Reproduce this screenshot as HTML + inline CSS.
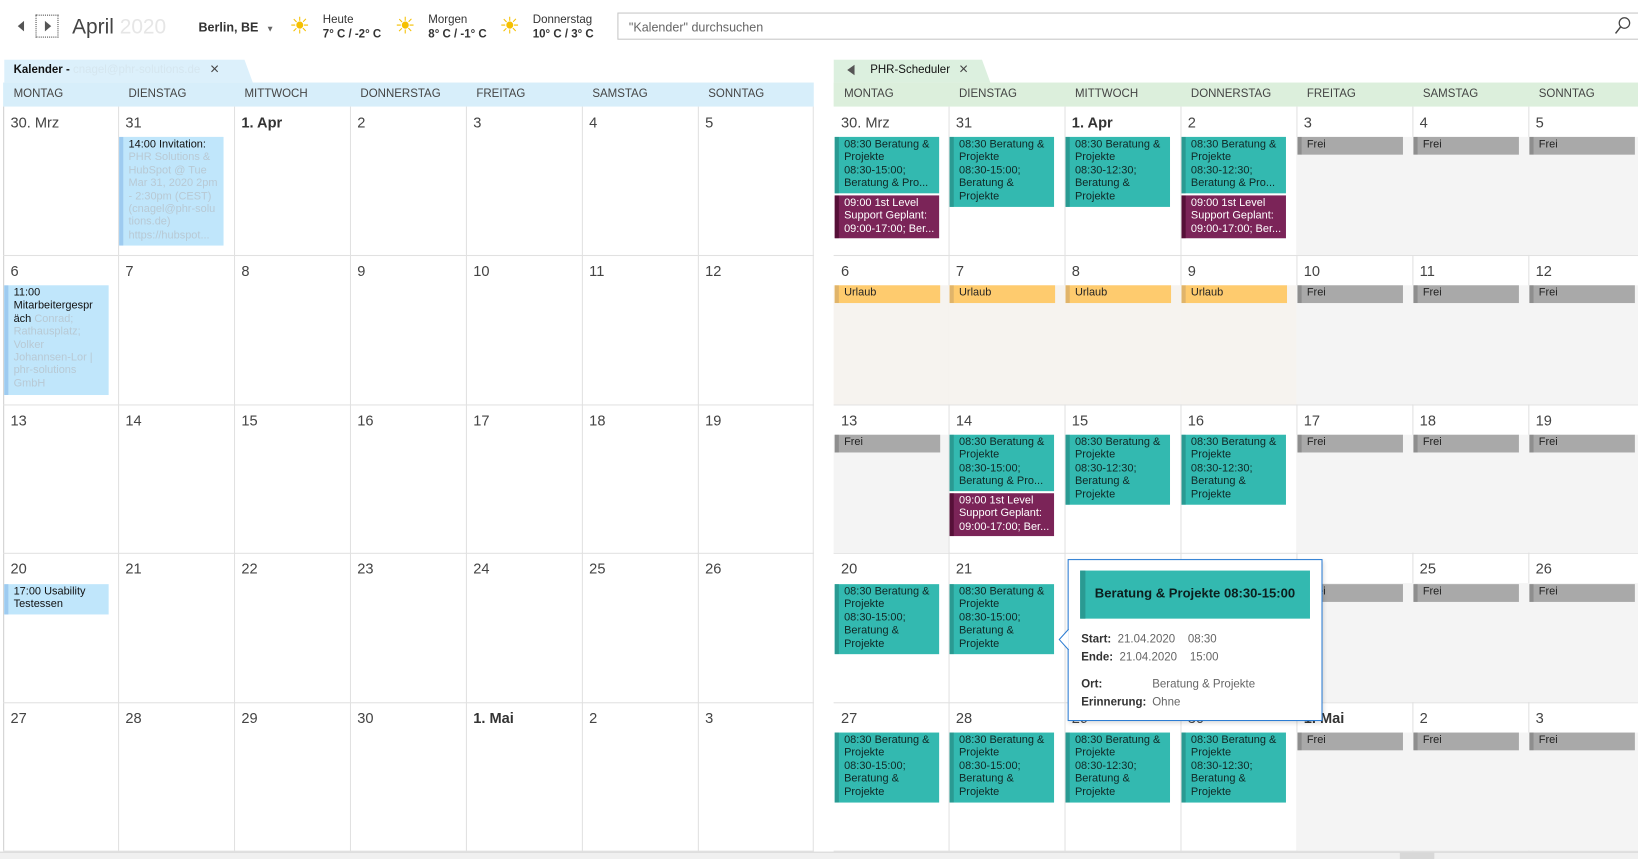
<!DOCTYPE html>
<html><head><meta charset="utf-8"><style>
*{margin:0;padding:0;box-sizing:border-box}
body{width:1638px;height:859px;overflow:hidden;background:#fff;font-family:"Liberation Sans",sans-serif;color:#333}
#w{position:absolute;left:0;top:0;width:1568px;height:822px;transform:scale(1.04465,1.045);transform-origin:0 0;overflow:hidden}
.a{position:absolute}
.c{position:absolute;border-right:1px solid #e1e1e1;border-bottom:1px solid #e1e1e1}
.n{position:absolute;left:7px;top:7px;font-size:14px;color:#444}
.b{font-weight:bold;color:#333}
.h{position:absolute;top:84px;font-size:11px;color:#444}
.e{position:absolute;font-size:10.5px;line-height:12.4px;padding:1px 0 0 9px;white-space:nowrap;overflow:hidden}
.e:before{content:"";position:absolute;left:0;top:0;bottom:0;width:4px}
.t{background:#33b9b0;color:#102826}.t:before{background:#2a9a92}
.p{background:#7b2458;color:#fff}.p:before{background:#561038}
.g{background:#a9a9a9;color:#222;height:17px}.g:before{background:#8e8e8e}
.u{background:#fecb6e;color:#222;height:17px}.u:before{background:#e0b46a}
.l{background:#c0e6fb;color:#111}.l:before{background:#9ecbf0}
.f{color:#b8c9d4}
.bg{position:absolute;left:0;right:0;top:29px;bottom:0}
</style></head><body><div id="w">

<!-- top bar -->
<div class="a" style="left:17px;top:20px;width:0;height:0;border-top:5px solid transparent;border-bottom:5px solid transparent;border-right:6px solid #555"></div>
<div class="a" style="left:34px;top:14px;width:22px;height:22px;border:1px dotted #444"></div>
<div class="a" style="left:43px;top:20px;width:0;height:0;border-top:5px solid transparent;border-bottom:5px solid transparent;border-left:6px solid #555"></div>
<div class="a" style="left:69px;top:15px;font-size:20px;color:#444">April <span style="color:#e6e6e6">2020</span></div>
<div class="a" style="left:190px;top:19px;font-size:12px;font-weight:bold;color:#333">Berlin, BE <span style="font-size:8px;color:#666;margin-left:4px">▼</span></div>
<div class="a" style="left:277px;top:12px;font-size:22px;color:#f5c000">☀</div>
<div class="a" style="left:309px;top:13px;font-size:11px;color:#333">Heute</div>
<div class="a" style="left:309px;top:27px;font-size:11px;font-weight:bold;color:#333">7° C / -2° C</div>
<div class="a" style="left:378px;top:12px;font-size:22px;color:#f5c000">☀</div>
<div class="a" style="left:410px;top:13px;font-size:11px;color:#333">Morgen</div>
<div class="a" style="left:410px;top:27px;font-size:11px;font-weight:bold;color:#333">8° C / -1° C</div>
<div class="a" style="left:478px;top:12px;font-size:22px;color:#f5c000">☀</div>
<div class="a" style="left:510px;top:13px;font-size:11px;color:#333">Donnerstag</div>
<div class="a" style="left:510px;top:27px;font-size:11px;font-weight:bold;color:#333">10° C / 3° C</div>
<div class="a" style="left:591px;top:12px;width:980px;height:26px;border:1px solid #c6c6c6"></div>
<div class="a" style="left:602px;top:19px;font-size:12px;color:#666">"Kalender" durchsuchen</div>
<svg class="a" style="left:1545px;top:16px" width="16" height="18" viewBox="0 0 16 18"><circle cx="10" cy="6" r="5" fill="none" stroke="#444" stroke-width="1.2"/><path d="M6.5 9.5 L1.5 16" stroke="#444" stroke-width="1.4"/></svg>

<!-- left tabs/header -->
<svg class="a" style="left:4px;top:57px" width="240" height="23"><path d="M0 0 H230 L238 22 H0 Z" fill="#dcf0fb"/></svg>
<div class="a" style="left:13px;top:61px;font-size:11px;font-weight:bold;color:#111">Kalender - <span style="font-weight:normal;color:#d5e6ef">cnagel@phr-solutions.de</span></div>
<div class="a" style="left:201px;top:58px;font-size:15px;color:#444">×</div>
<div class="a" style="left:3px;top:79px;width:776px;height:23px;background:#d7eefa"></div>
<div class="a" style="left:3px;top:102px;width:1px;height:712px;background:#d0d0d0"></div>

<!-- right tabs/header -->
<svg class="a" style="left:798px;top:57px" width="152" height="23"><path d="M0 0 H142 L150 22 H0 Z" fill="#dcf0df"/></svg>
<div class="a" style="left:811px;top:62px;width:0;height:0;border-top:5px solid transparent;border-bottom:5px solid transparent;border-right:7px solid #555"></div>
<div class="a" style="left:833px;top:61px;font-size:11px;color:#111">PHR-Scheduler</div>
<div class="a" style="left:918px;top:58px;font-size:15px;color:#444">×</div>
<div class="a" style="left:798px;top:79px;width:770px;height:23px;background:#dcefdc"></div>

<!-- headers -->
<div class="h" style="left:13px">MONTAG</div><div class="h" style="left:123px">DIENSTAG</div><div class="h" style="left:234px">MITTWOCH</div><div class="h" style="left:345px">DONNERSTAG</div><div class="h" style="left:456px">FREITAG</div><div class="h" style="left:567px">SAMSTAG</div><div class="h" style="left:678px">SONNTAG</div>
<div class="h" style="left:808px">MONTAG</div><div class="h" style="left:918px">DIENSTAG</div><div class="h" style="left:1029px">MITTWOCH</div><div class="h" style="left:1140px">DONNERSTAG</div><div class="h" style="left:1251px">FREITAG</div><div class="h" style="left:1362px">SAMSTAG</div><div class="h" style="left:1473px">SONNTAG</div>

<!-- LEFT GRID -->
<!-- row1 y102 -->
<div class="c" style="left:3px;top:102px;width:111px;height:143px"><div class="n">30. Mrz</div></div>
<div class="c" style="left:113px;top:102px;width:112px;height:143px"><div class="n">31</div>
 <div class="e l" style="left:1px;top:29px;width:100px;height:104px">14:00 Invitation:<br><span class="f">PHR Solutions &amp;<br>HubSpot @ Tue<br>Mar 31, 2020 2pm<br>- 2:30pm (CEST)<br>(cnagel@phr-solu<br>tions.de)<br>https://hubspot...</span></div></div>
<div class="c" style="left:224px;top:102px;width:112px;height:143px"><div class="n b">1. Apr</div></div>
<div class="c" style="left:335px;top:102px;width:112px;height:143px"><div class="n">2</div></div>
<div class="c" style="left:446px;top:102px;width:112px;height:143px"><div class="n">3</div></div>
<div class="c" style="left:557px;top:102px;width:112px;height:143px"><div class="n">4</div></div>
<div class="c" style="left:668px;top:102px;width:111px;height:143px"><div class="n">5</div></div>
<!-- row2 y244 -->
<div class="c" style="left:3px;top:244px;width:111px;height:144px"><div class="n">6</div>
 <div class="e l" style="left:1px;top:29px;width:100px;height:105px">11:00<br>Mitarbeitergespr<br>äch <span class="f">Conrad;<br>Rathausplatz;<br>Volker<br>Johannsen-Lor |<br>phr-solutions<br>GmbH</span></div></div>
<div class="c" style="left:113px;top:244px;width:112px;height:144px"><div class="n">7</div></div>
<div class="c" style="left:224px;top:244px;width:112px;height:144px"><div class="n">8</div></div>
<div class="c" style="left:335px;top:244px;width:112px;height:144px"><div class="n">9</div></div>
<div class="c" style="left:446px;top:244px;width:112px;height:144px"><div class="n">10</div></div>
<div class="c" style="left:557px;top:244px;width:112px;height:144px"><div class="n">11</div></div>
<div class="c" style="left:668px;top:244px;width:111px;height:144px"><div class="n">12</div></div>
<!-- row3 y387 -->
<div class="c" style="left:3px;top:387px;width:111px;height:143px"><div class="n">13</div></div>
<div class="c" style="left:113px;top:387px;width:112px;height:143px"><div class="n">14</div></div>
<div class="c" style="left:224px;top:387px;width:112px;height:143px"><div class="n">15</div></div>
<div class="c" style="left:335px;top:387px;width:112px;height:143px"><div class="n">16</div></div>
<div class="c" style="left:446px;top:387px;width:112px;height:143px"><div class="n">17</div></div>
<div class="c" style="left:557px;top:387px;width:112px;height:143px"><div class="n">18</div></div>
<div class="c" style="left:668px;top:387px;width:111px;height:143px"><div class="n">19</div></div>
<!-- row4 y529 -->
<div class="c" style="left:3px;top:529px;width:111px;height:144px"><div class="n">20</div>
 <div class="e l" style="left:1px;top:30px;width:100px;height:29px">17:00 Usability<br>Testessen</div></div>
<div class="c" style="left:113px;top:529px;width:112px;height:144px"><div class="n">21</div></div>
<div class="c" style="left:224px;top:529px;width:112px;height:144px"><div class="n">22</div></div>
<div class="c" style="left:335px;top:529px;width:112px;height:144px"><div class="n">23</div></div>
<div class="c" style="left:446px;top:529px;width:112px;height:144px"><div class="n">24</div></div>
<div class="c" style="left:557px;top:529px;width:112px;height:144px"><div class="n">25</div></div>
<div class="c" style="left:668px;top:529px;width:111px;height:144px"><div class="n">26</div></div>
<!-- row5 y672 -->
<div class="c" style="left:3px;top:672px;width:111px;height:143px"><div class="n">27</div></div>
<div class="c" style="left:113px;top:672px;width:112px;height:143px"><div class="n">28</div></div>
<div class="c" style="left:224px;top:672px;width:112px;height:143px"><div class="n">29</div></div>
<div class="c" style="left:335px;top:672px;width:112px;height:143px"><div class="n">30</div></div>
<div class="c" style="left:446px;top:672px;width:112px;height:143px"><div class="n b">1. Mai</div></div>
<div class="c" style="left:557px;top:672px;width:112px;height:143px"><div class="n">2</div></div>
<div class="c" style="left:668px;top:672px;width:111px;height:143px"><div class="n">3</div></div>

<!-- RIGHT GRID -->
<!-- row1 -->
<div class="c" style="left:798px;top:102px;width:111px;height:143px"><div class="n">30. Mrz</div>
 <div class="e t" style="left:1px;top:29px;width:100px;height:54px">08:30 Beratung &amp;<br>Projekte<br>08:30-15:00;<br>Beratung &amp; Pro...</div>
 <div class="e p" style="left:1px;top:85px;width:100px;height:41px">09:00 1st Level<br>Support Geplant:<br>09:00-17:00; Ber...</div></div>
<div class="c" style="left:908px;top:102px;width:112px;height:143px"><div class="n">31</div>
 <div class="e t" style="left:1px;top:29px;width:100px;height:67px">08:30 Beratung &amp;<br>Projekte<br>08:30-15:00;<br>Beratung &amp;<br>Projekte</div></div>
<div class="c" style="left:1019px;top:102px;width:112px;height:143px"><div class="n b">1. Apr</div>
 <div class="e t" style="left:1px;top:29px;width:100px;height:67px">08:30 Beratung &amp;<br>Projekte<br>08:30-12:30;<br>Beratung &amp;<br>Projekte</div></div>
<div class="c" style="left:1130px;top:102px;width:112px;height:143px"><div class="n">2</div>
 <div class="e t" style="left:1px;top:29px;width:100px;height:54px">08:30 Beratung &amp;<br>Projekte<br>08:30-12:30;<br>Beratung &amp; Pro...</div>
 <div class="e p" style="left:1px;top:85px;width:100px;height:41px">09:00 1st Level<br>Support Geplant:<br>09:00-17:00; Ber...</div></div>
<div class="c" style="left:1241px;top:102px;width:112px;height:143px"><div class="bg" style="background:#f4f4f4"></div><div class="n">3</div><div class="e g" style="left:1px;top:29px;width:101px">Frei</div></div>
<div class="c" style="left:1352px;top:102px;width:112px;height:143px"><div class="bg" style="background:#f4f4f4"></div><div class="n">4</div><div class="e g" style="left:1px;top:29px;width:101px">Frei</div></div>
<div class="c" style="left:1463px;top:102px;width:112px;height:143px"><div class="bg" style="background:#f4f4f4"></div><div class="n">5</div><div class="e g" style="left:1px;top:29px;width:101px">Frei</div></div>
<!-- row2 -->
<div class="c" style="left:798px;top:244px;width:111px;height:144px"><div class="bg" style="background:#f6f3ef"></div><div class="n">6</div><div class="e u" style="left:1px;top:29px;width:101px">Urlaub</div></div>
<div class="c" style="left:908px;top:244px;width:112px;height:144px"><div class="bg" style="background:#f6f3ef"></div><div class="n">7</div><div class="e u" style="left:1px;top:29px;width:101px">Urlaub</div></div>
<div class="c" style="left:1019px;top:244px;width:112px;height:144px"><div class="bg" style="background:#f6f3ef"></div><div class="n">8</div><div class="e u" style="left:1px;top:29px;width:101px">Urlaub</div></div>
<div class="c" style="left:1130px;top:244px;width:112px;height:144px"><div class="bg" style="background:#f6f3ef"></div><div class="n">9</div><div class="e u" style="left:1px;top:29px;width:101px">Urlaub</div></div>
<div class="c" style="left:1241px;top:244px;width:112px;height:144px"><div class="bg" style="background:#f4f4f4"></div><div class="n">10</div><div class="e g" style="left:1px;top:29px;width:101px">Frei</div></div>
<div class="c" style="left:1352px;top:244px;width:112px;height:144px"><div class="bg" style="background:#f4f4f4"></div><div class="n">11</div><div class="e g" style="left:1px;top:29px;width:101px">Frei</div></div>
<div class="c" style="left:1463px;top:244px;width:112px;height:144px"><div class="bg" style="background:#f4f4f4"></div><div class="n">12</div><div class="e g" style="left:1px;top:29px;width:101px">Frei</div></div>
<!-- row3 -->
<div class="c" style="left:798px;top:387px;width:111px;height:143px"><div class="bg" style="background:#f4f4f4"></div><div class="n">13</div><div class="e g" style="left:1px;top:29px;width:101px">Frei</div></div>
<div class="c" style="left:908px;top:387px;width:112px;height:143px"><div class="n">14</div>
 <div class="e t" style="left:1px;top:29px;width:100px;height:54px">08:30 Beratung &amp;<br>Projekte<br>08:30-15:00;<br>Beratung &amp; Pro...</div>
 <div class="e p" style="left:1px;top:85px;width:100px;height:41px">09:00 1st Level<br>Support Geplant:<br>09:00-17:00; Ber...</div></div>
<div class="c" style="left:1019px;top:387px;width:112px;height:143px"><div class="n">15</div>
 <div class="e t" style="left:1px;top:29px;width:100px;height:67px">08:30 Beratung &amp;<br>Projekte<br>08:30-12:30;<br>Beratung &amp;<br>Projekte</div></div>
<div class="c" style="left:1130px;top:387px;width:112px;height:143px"><div class="n">16</div>
 <div class="e t" style="left:1px;top:29px;width:100px;height:67px">08:30 Beratung &amp;<br>Projekte<br>08:30-12:30;<br>Beratung &amp;<br>Projekte</div></div>
<div class="c" style="left:1241px;top:387px;width:112px;height:143px"><div class="bg" style="background:#f4f4f4"></div><div class="n">17</div><div class="e g" style="left:1px;top:29px;width:101px">Frei</div></div>
<div class="c" style="left:1352px;top:387px;width:112px;height:143px"><div class="bg" style="background:#f4f4f4"></div><div class="n">18</div><div class="e g" style="left:1px;top:29px;width:101px">Frei</div></div>
<div class="c" style="left:1463px;top:387px;width:112px;height:143px"><div class="bg" style="background:#f4f4f4"></div><div class="n">19</div><div class="e g" style="left:1px;top:29px;width:101px">Frei</div></div>
<!-- row4 -->
<div class="c" style="left:798px;top:529px;width:111px;height:144px"><div class="n">20</div>
 <div class="e t" style="left:1px;top:30px;width:100px;height:67px">08:30 Beratung &amp;<br>Projekte<br>08:30-15:00;<br>Beratung &amp;<br>Projekte</div></div>
<div class="c" style="left:908px;top:529px;width:112px;height:144px"><div class="n">21</div>
 <div class="e t" style="left:1px;top:30px;width:100px;height:67px">08:30 Beratung &amp;<br>Projekte<br>08:30-15:00;<br>Beratung &amp;<br>Projekte</div></div>
<div class="c" style="left:1019px;top:529px;width:112px;height:144px"><div class="n">22</div></div>
<div class="c" style="left:1130px;top:529px;width:112px;height:144px"><div class="n">23</div></div>
<div class="c" style="left:1241px;top:529px;width:112px;height:144px"><div class="bg" style="background:#f4f4f4"></div><div class="n">24</div><div class="e g" style="left:1px;top:30px;width:101px">Frei</div></div>
<div class="c" style="left:1352px;top:529px;width:112px;height:144px"><div class="bg" style="background:#f4f4f4"></div><div class="n">25</div><div class="e g" style="left:1px;top:30px;width:101px">Frei</div></div>
<div class="c" style="left:1463px;top:529px;width:112px;height:144px"><div class="bg" style="background:#f4f4f4"></div><div class="n">26</div><div class="e g" style="left:1px;top:30px;width:101px">Frei</div></div>
<!-- row5 -->
<div class="c" style="left:798px;top:672px;width:111px;height:143px"><div class="n">27</div>
 <div class="e t" style="left:1px;top:29px;width:100px;height:67px">08:30 Beratung &amp;<br>Projekte<br>08:30-15:00;<br>Beratung &amp;<br>Projekte</div></div>
<div class="c" style="left:908px;top:672px;width:112px;height:143px"><div class="n">28</div>
 <div class="e t" style="left:1px;top:29px;width:100px;height:67px">08:30 Beratung &amp;<br>Projekte<br>08:30-15:00;<br>Beratung &amp;<br>Projekte</div></div>
<div class="c" style="left:1019px;top:672px;width:112px;height:143px"><div class="n">29</div>
 <div class="e t" style="left:1px;top:29px;width:100px;height:67px">08:30 Beratung &amp;<br>Projekte<br>08:30-12:30;<br>Beratung &amp;<br>Projekte</div></div>
<div class="c" style="left:1130px;top:672px;width:112px;height:143px"><div class="n">30</div>
 <div class="e t" style="left:1px;top:29px;width:100px;height:67px">08:30 Beratung &amp;<br>Projekte<br>08:30-12:30;<br>Beratung &amp;<br>Projekte</div></div>
<div class="c" style="left:1241px;top:672px;width:112px;height:143px"><div class="bg" style="background:#f4f4f4"></div><div class="n b">1. Mai</div><div class="e g" style="left:1px;top:29px;width:101px">Frei</div></div>
<div class="c" style="left:1352px;top:672px;width:112px;height:143px"><div class="bg" style="background:#f4f4f4"></div><div class="n">2</div><div class="e g" style="left:1px;top:29px;width:101px">Frei</div></div>
<div class="c" style="left:1463px;top:672px;width:112px;height:143px"><div class="bg" style="background:#f4f4f4"></div><div class="n">3</div><div class="e g" style="left:1px;top:29px;width:101px">Frei</div></div>

<!-- popup -->
<div class="a" style="left:1022px;top:535px;width:244px;height:155px;background:#fff;border:1px solid #2b7cd3;box-shadow:1px 2px 4px rgba(0,0,0,.15)"></div>
<svg class="a" style="left:1013px;top:602px" width="11" height="20"><path d="M10 0 L1 10 L10 20" fill="#fff" stroke="#2b7cd3"/></svg>
<div class="a" style="left:1034px;top:546px;width:220px;height:46px;background:#33b9b0;border-left:5px solid #2a9a92"></div>
<div class="a" style="left:1048px;top:561px;font-size:12.5px;font-weight:bold;color:#0c1f1e">Beratung &amp; Projekte 08:30-15:00</div>
<div class="a" style="left:1035px;top:604px;font-size:11px;color:#333;line-height:16.5px"><b>Start:</b>&nbsp; <span style="color:#666">21.04.2020&nbsp;&nbsp;&nbsp; 08:30</span><br><b>Ende:</b>&nbsp; <span style="color:#666">21.04.2020&nbsp;&nbsp;&nbsp; 15:00</span></div>
<div class="a" style="left:1035px;top:647px;font-size:11px;color:#333;line-height:16.5px"><b>Ort:</b><br><b>Erinnerung:</b></div>
<div class="a" style="left:1103px;top:647px;font-size:11px;color:#666;line-height:16.5px">Beratung &amp; Projekte<br>Ohne</div>

<!-- status bar -->
<div class="a" style="left:0;top:815px;width:1568px;height:7px;background:#f0f0f0;border-top:1px solid #d6d6d6"></div>
<div class="a" style="left:1340px;top:816px;width:33px;height:6px;background:#d8d8d8"></div>
</div></body></html>
